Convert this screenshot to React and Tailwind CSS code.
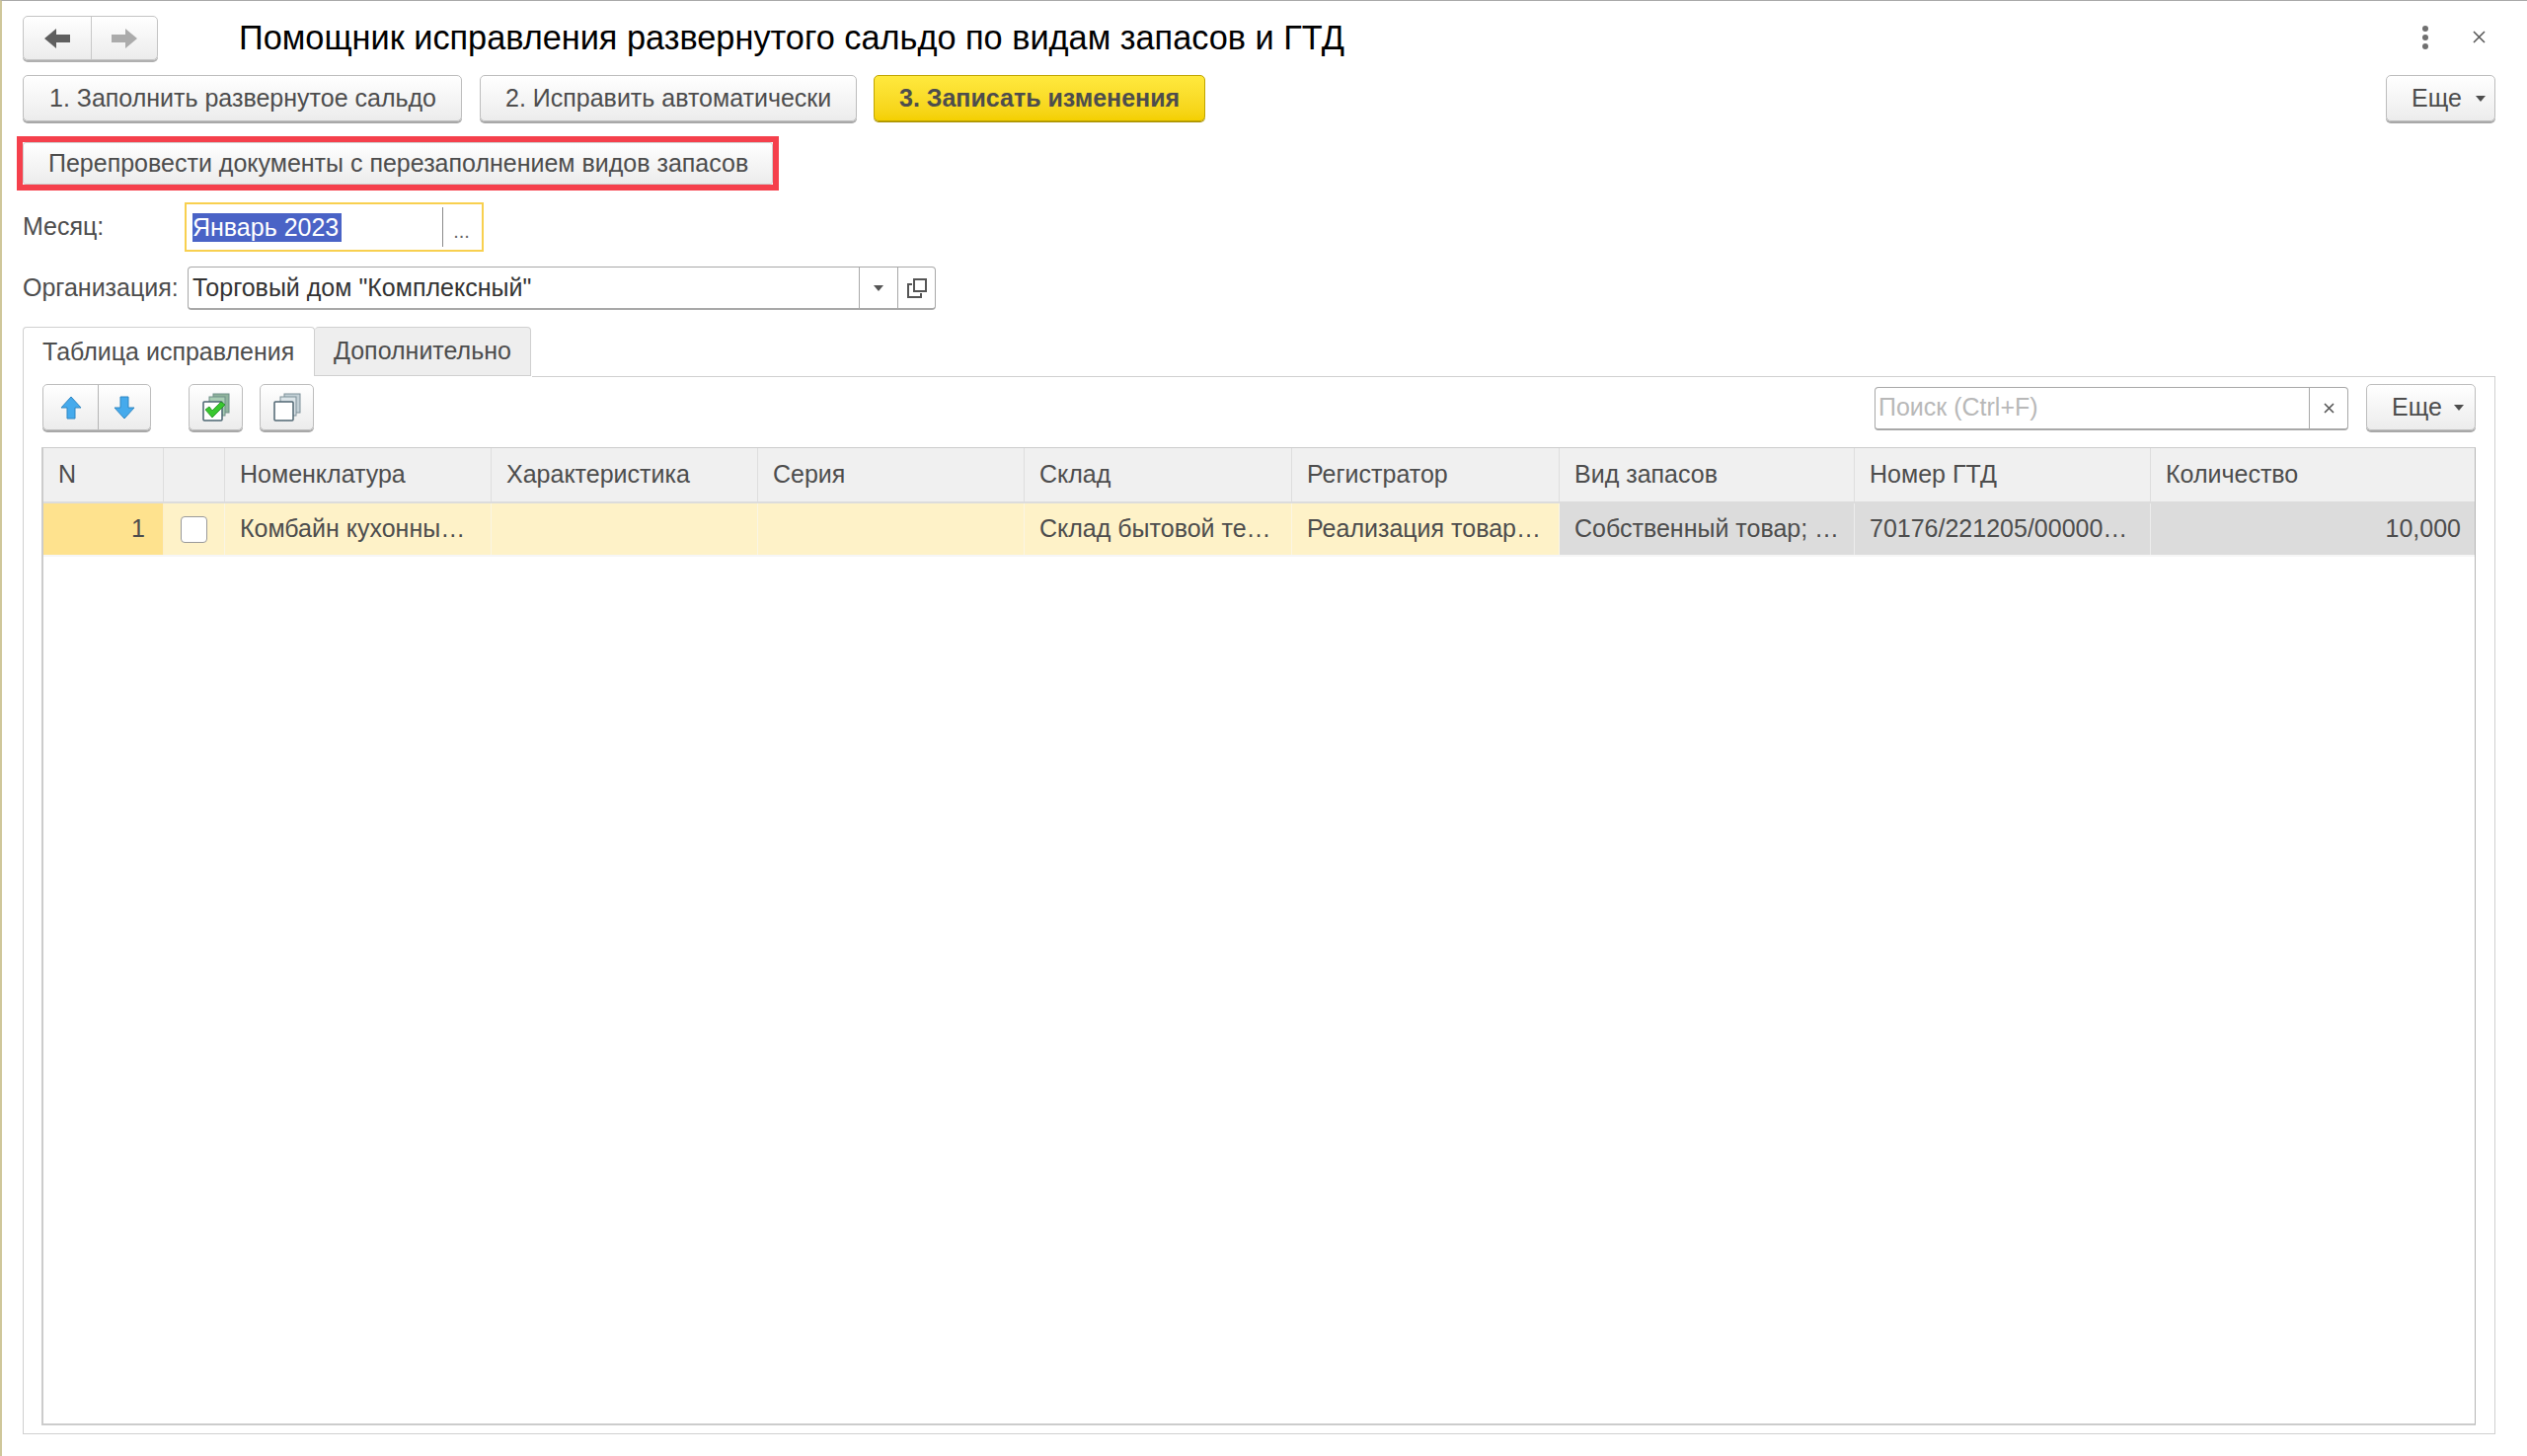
import { useState } from 'react';

const font = { fontFamily: '"Liberation Sans", Arial, sans-serif' };

const btnClass =
  'h-[47px] flex items-center rounded-[5px] border border-[#bdbdbd] bg-linear-to-b from-white to-[#ececec] shadow-[0_2px_0_#a8a8a8] text-[#4d4d4d] text-[25px] whitespace-nowrap';

const columns = [
  { title: 'N' },
  { title: '' },
  { title: 'Номенклатура' },
  { title: 'Характеристика' },
  { title: 'Серия' },
  { title: 'Склад' },
  { title: 'Регистратор' },
  { title: 'Вид запасов' },
  { title: 'Номер ГТД' },
  { title: 'Количество' },
];

const cellBase = 'h-[52px] flex items-center min-w-0 border-r border-[#f7f7f7]/60 whitespace-nowrap text-[25px] text-[#4d4d4d]';

function Caret({ color = '#4d4d4d' }) {
  return (
    <svg width="10" height="6" viewBox="0 0 10 6">
      <polygon points="0,0 10,0 5,6" fill={color} />
    </svg>
  );
}

function ArrowLeft({ fill }) {
  return (
    <svg width="26" height="20" viewBox="0 0 26 20">
      <polygon points="0,10 12,0 12,6 26,6 26,14 12,14 12,20" fill={fill} />
    </svg>
  );
}

function ArrowRight({ fill }) {
  return (
    <svg width="26" height="20" viewBox="0 0 26 20">
      <polygon points="26,10 14,0 14,6 0,6 0,14 14,14 14,20" fill={fill} />
    </svg>
  );
}

function ArrowUp() {
  return (
    <svg width="22" height="24" viewBox="0 0 22 24">
      <polygon points="11,1 21,12 15,12 15,23 7,23 7,12 1,12" fill="#45aaec" stroke="#2f86c2" strokeWidth="1" />
    </svg>
  );
}

function ArrowDown() {
  return (
    <svg width="22" height="24" viewBox="0 0 22 24">
      <polygon points="11,23 21,12 15,12 15,1 7,1 7,12 1,12" fill="#45aaec" stroke="#2f86c2" strokeWidth="1" />
    </svg>
  );
}

function CheckPages() {
  return (
    <svg width="30" height="30" viewBox="0 0 30 30">
      <rect x="12" y="1" width="16" height="19" fill="#8fb39c" stroke="#6f8f88" />
      <rect x="8" y="4" width="16" height="19" fill="#a9cdb4" stroke="#6f8f88" />
      <rect x="2" y="9" width="19" height="19" rx="1" fill="#ffffff" stroke="#4a6470" strokeWidth="1.5" />
      <path d="M4 17 L8 14 L11 18 L20 9 L24 12 L11 25 Z" fill="#38c72e" stroke="#1c8a1c" strokeWidth="0.8" />
    </svg>
  );
}

function CopyPages() {
  return (
    <svg width="30" height="30" viewBox="0 0 30 30">
      <rect x="12" y="1" width="16" height="19" fill="#c3d0d6" stroke="#7d8f98" />
      <rect x="8" y="4" width="16" height="19" fill="#dbe4e8" stroke="#7d8f98" />
      <rect x="2" y="9" width="19" height="19" rx="1" fill="#ffffff" stroke="#4f6672" strokeWidth="1.5" />
    </svg>
  );
}

function OpenIcon() {
  return (
    <svg width="20" height="20" viewBox="0 0 20 20" fill="none" stroke="#555555" strokeWidth="2">
      <rect x="7" y="1" width="12" height="12" />
      <path d="M5 6 H1 V19 H14 V15" />
    </svg>
  );
}

export default function App() {
  const [checked, setChecked] = useState(false);

  return (
    <div style={font} className="w-[2560px] h-[1475px] bg-white border-t border-t-[#a9a9a9] border-l-2 border-l-[#cfc79a] pl-[21px] pr-[32px] pt-[15px] flex flex-col overflow-hidden">
      {/* заголовок */}
      <div className="flex items-center h-[45px]">
        <div className="w-[137px] h-[45px] flex rounded-[5px] border border-[#c4c4c4] bg-linear-to-b from-white to-[#ececec] shadow-[0_2px_0_#b0b0b0]">
          <div className="w-[69px] flex items-center justify-center border-r border-[#c8c8c8]">
            <ArrowLeft fill="#5f5f5f" />
          </div>
          <div className="flex-1 flex items-center justify-center">
            <ArrowRight fill="#ababab" />
          </div>
        </div>
        <h1 className="ml-[82px] text-[34.3px] leading-none text-black whitespace-nowrap">
          Помощник исправления развернутого сальдо по видам запасов и ГТД
        </h1>
        <div className="ml-auto flex items-center mb-[2px]">
          <div className="flex flex-col gap-[3px] mr-[45px]">
            <span className="w-[6px] h-[6px] rounded-full bg-[#707070]" />
            <span className="w-[6px] h-[6px] rounded-full bg-[#707070]" />
            <span className="w-[6px] h-[6px] rounded-full bg-[#707070]" />
          </div>
          <svg className="mr-[10px]" width="13" height="13" viewBox="0 0 13 13" stroke="#555555" strokeWidth="1.5">
            <path d="M1 1 L12 12 M12 1 L1 12" />
          </svg>
        </div>
      </div>

      {/* кнопки шагов */}
      <div className="flex items-center mt-[15px]">
        <button className={`${btnClass} w-[445px] pl-[26px]`}>1. Заполнить развернутое сальдо</button>
        <button className={`${btnClass} w-[382px] ml-[18px] pl-[25px]`}>2. Исправить автоматически</button>
        <button className="h-[47px] w-[336px] ml-[17px] pl-[25px] flex items-center rounded-[5px] border border-[#c0a500] bg-linear-to-b from-[#ffe93d] to-[#f4d000] shadow-[0_1px_0_#a89000] text-[#4d4d4d] text-[25px] font-bold whitespace-nowrap">
          3. Записать изменения
        </button>
        <button className={`${btnClass} w-[111px] ml-auto pl-[25px] gap-[14px]`}>
          Еще <Caret />
        </button>
      </div>

      {/* выделенная кнопка */}
      <div className="w-fit mt-[15px] ml-[-6px] border-[6px] border-[#f5404c]">
        <button className="h-[43px] w-[760px] pl-[25px] flex items-center rounded-[3px] border border-[#d0d0d0] bg-linear-to-b from-white to-[#ececec] text-[#4d4d4d] text-[25px] whitespace-nowrap">
          Перепровести документы с перезаполнением видов запасов
        </button>
      </div>

      {/* месяц */}
      <div className="flex items-center mt-[12px] h-[50px]">
        <label className="w-[164px] text-[25px] text-[#4d4d4d]">Месяц:</label>
        <div className="w-[303px] h-[50px] flex items-center border-2 border-[#f8d04f] pl-[6px]">
          <div className="w-[253px] h-full flex items-center">
            <span className="bg-[#4a63c6] text-white text-[25px] leading-[29px] w-[151px] whitespace-nowrap">Январь 2023</span>
          </div>
          <div className="h-[40px] flex-1 border-l border-[#8a8a8a] flex items-end justify-center pb-[6px] pr-[2px] text-[20px] leading-none text-[#666666]">
            ...
          </div>
        </div>
      </div>

      {/* организация */}
      <div className="flex items-center mt-[15px] h-[44px]">
        <label className="w-[167px] text-[25px] text-[#4d4d4d] whitespace-nowrap">Организация:</label>
        <div className="w-[758px] h-[44px] flex rounded-[4px] border border-[#a8a8a8] border-b-2 text-[25px] text-[#333333]">
          <div className="w-[679px] pl-[4px] flex items-center whitespace-nowrap">Торговый дом "Комплексный"</div>
          <div className="w-[39px] flex items-center justify-center border-l border-[#a8a8a8]">
            <Caret color="#555555" />
          </div>
          <div className="flex-1 flex items-center justify-center border-l border-[#a8a8a8]">
            <OpenIcon />
          </div>
        </div>
      </div>

      {/* вкладки */}
      <div className="flex mt-[17px] h-[50px]">
        <div className="w-[296px] pl-[19px] flex items-center rounded-t-[4px] border border-b-0 border-[#d0d0d0] bg-white text-[25px] text-[#4d4d4d] whitespace-nowrap">
          Таблица исправления
        </div>
        <div className="w-[219px] pl-[19px] flex items-center rounded-t-[4px] border border-l-0 border-[#d0d0d0] bg-[#eeeeee] text-[25px] text-[#4d4d4d] whitespace-nowrap">
          Дополнительно
        </div>
      </div>

      {/* панель */}
      <div className="w-[2505px] h-[1072px] border border-t-0 border-[#d0d0d0] relative flex flex-col px-[19px] pt-[8px] pb-[8px]">
        <div className="absolute top-0 left-[515px] right-0 border-t border-[#d0d0d0]" />

        <div className="flex items-center h-[47px]">
          <div className={`${btnClass} w-[110px] !h-[47px]`}>
            <div className="w-[56px] h-full flex items-center justify-center border-r border-[#b5b5b5]">
              <ArrowUp />
            </div>
            <div className="flex-1 flex items-center justify-center">
              <ArrowDown />
            </div>
          </div>
          <div className={`${btnClass} w-[55px] ml-[38px] justify-center`}>
            <CheckPages />
          </div>
          <div className={`${btnClass} w-[55px] ml-[17px] justify-center`}>
            <CopyPages />
          </div>

          <div className="ml-auto mt-[2px] w-[480px] h-[44px] flex rounded-[4px] border border-[#a8a8a8] border-b-2">
            <div className="flex-1 pl-[3px] flex items-center text-[25px] text-[#b8b8b8] whitespace-nowrap">Поиск (Ctrl+F)</div>
            <div className="w-[39px] flex items-center justify-center border-l border-[#a8a8a8]">
              <svg width="11" height="11" viewBox="0 0 11 11" stroke="#555555" strokeWidth="1.6">
                <path d="M1 1 L10 10 M10 1 L1 10" />
              </svg>
            </div>
          </div>
          <button className={`${btnClass} w-[111px] ml-[18px] pl-[25px] gap-[12px]`}>
            Еще <Caret />
          </button>
        </div>

        {/* таблица */}
        <div className="mt-[17px] ml-[-1px] flex-1 border-2 border-t border-[#cccccc] border-r-[#b5b5b5] border-r">
          <div className="grid grid-cols-[122px_62px_270px_270px_270px_271px_271px_299px_300px_1fr] bg-[#f0f0f0] border-b-2 border-[#dcdcdc]">
            {columns.map((col, i) => (
              <div key={i} className="h-[54px] pl-[15px] flex items-center border-r border-[#dedede] last:border-r-0 text-[25px] text-[#4d4d4d] whitespace-nowrap">
                {col.title}
              </div>
            ))}
          </div>
          <div className="grid grid-cols-[122px_62px_270px_270px_270px_271px_271px_299px_300px_1fr] border-b-2 border-[#f6f6f6]">
            <div className={`${cellBase} bg-[#fee28e] justify-end pr-[18px]`}>1</div>
            <div className={`${cellBase} bg-[#fef2c8] pl-[17px]`}>
              <input
                type="checkbox"
                checked={checked}
                onChange={(e) => setChecked(e.target.checked)}
                className="appearance-none w-[27px] h-[27px] rounded-[4px] border border-[#9a9a9a] bg-white"
              />
            </div>
            <div className={`${cellBase} bg-[#fef2c8] pl-[15px]`}>Комбайн кухонны…</div>
            <div className={`${cellBase} bg-[#fef2c8]`} />
            <div className={`${cellBase} bg-[#fef2c8]`} />
            <div className={`${cellBase} bg-[#fef2c8] pl-[15px]`}>Склад бытовой те…</div>
            <div className={`${cellBase} bg-[#fef2c8] pl-[15px]`}>Реализация товар…</div>
            <div className={`${cellBase} bg-[#dcdcdc] pl-[15px]`}>Собственный товар; …</div>
            <div className={`${cellBase} bg-[#dcdcdc] pl-[15px]`}>70176/221205/00000…</div>
            <div className={`${cellBase} bg-[#dcdcdc] justify-end pr-[14px] border-r-0`}>10,000</div>
          </div>
        </div>
      </div>
    </div>
  );
}
